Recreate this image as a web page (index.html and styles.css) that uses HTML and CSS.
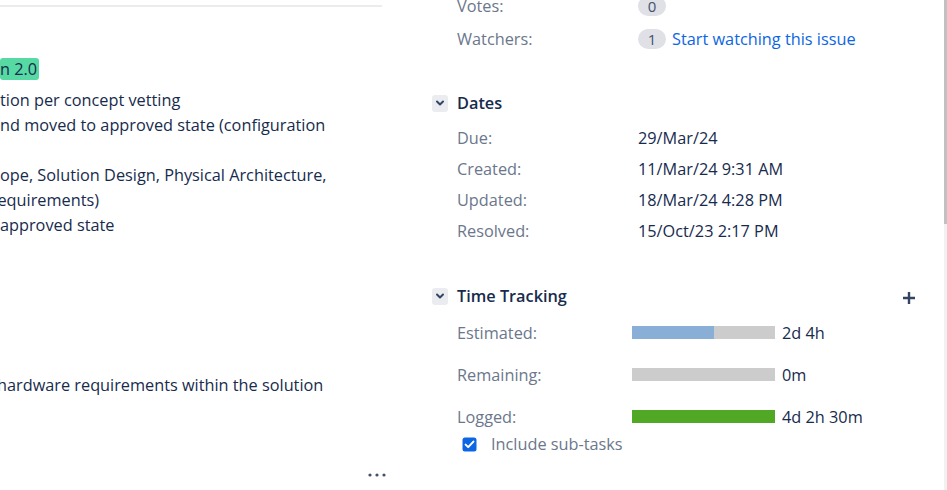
FILE: index.html
```
<!DOCTYPE html>
<html lang="en">
<head>
    <meta charset="UTF-8">
    <meta name="viewport" content="width=device-width, initial-scale=1.0">
    <title>Issue details</title>
    <link rel="stylesheet" href="styles.css">
</head>
<body>
    <div class="page">
        <div class="main">
            <div class="left">
                <div class="rule"></div>
                <div class="lozenge-row">
                    <span class="lozenge">n 2.0</span>
                </div>
                <div class="desc">
                    <div>tion per concept vetting</div>
                    <div>nd moved to approved state (configuration</div>
                    <div>&nbsp;</div>
                    <div>ope, Solution Design, Physical Architecture,</div>
                    <div class="cut">(requirements)</div>
                    <div>approved state</div>
                </div>
                <div class="desc desc-low">
                    <div class="cut-h">hardware requirements within the solution</div>
                </div>
                <div class="more">
                    <svg width="18" height="6" viewBox="0 0 18 6"><circle cx="2" cy="3" r="1.6" fill="#42526e"/><circle cx="9" cy="3" r="1.6" fill="#42526e"/><circle cx="16" cy="3" r="1.6" fill="#42526e"/></svg>
                </div>
            </div>

            <div class="right">
                <div class="people">
                    <div class="row">
                        <span class="label">Votes:</span>
                        <span class="value"><span class="badge">0</span></span>
                    </div>
                    <div class="row">
                        <span class="label">Watchers:</span>
                        <span class="value"><span class="badge">1</span> <a href="#" class="link">Start watching this issue</a></span>
                    </div>
                </div>

                <div class="module">
                    <div class="mod-head">
                        <span class="toggle">
                            <svg width="10" height="10" viewBox="0 0 10 10"><path d="M2 3.5 L5 6.5 L8 3.5" fill="none" stroke="#344563" stroke-width="2" stroke-linecap="round" stroke-linejoin="round"/></svg>
                        </span>
                        <h3>Dates</h3>
                    </div>
                    <div class="row date">
                        <span class="label">Due:</span>
                        <span class="value">29/Mar/24</span>
                    </div>
                    <div class="row date">
                        <span class="label">Created:</span>
                        <span class="value">11/Mar/24 9:31 AM</span>
                    </div>
                    <div class="row date">
                        <span class="label">Updated:</span>
                        <span class="value">18/Mar/24 4:28 PM</span>
                    </div>
                    <div class="row date">
                        <span class="label">Resolved:</span>
                        <span class="value">15/Oct/23 2:17 PM</span>
                    </div>
                </div>

                <div class="module tracking">
                    <div class="mod-head">
                        <span class="toggle">
                            <svg width="10" height="10" viewBox="0 0 10 10"><path d="M2 3.5 L5 6.5 L8 3.5" fill="none" stroke="#344563" stroke-width="2" stroke-linecap="round" stroke-linejoin="round"/></svg>
                        </span>
                        <h3>Time Tracking</h3>
                        <span class="add">
                            <svg width="14" height="14" viewBox="0 0 14 14"><path d="M7 1 V13 M1 7 H13" stroke="#344563" stroke-width="2.4"/></svg>
                        </span>
                    </div>
                    <div class="tt-row">
                        <span class="label">Estimated:</span>
                        <span class="bar"><span class="fill estimate" style="width: 57%"></span></span>
                        <span class="value">2d 4h</span>
                    </div>
                    <div class="tt-row">
                        <span class="label">Remaining:</span>
                        <span class="bar"></span>
                        <span class="value">0m</span>
                    </div>
                    <div class="tt-row">
                        <span class="label">Logged:</span>
                        <span class="bar"><span class="fill logged" style="width: 100%"></span></span>
                        <span class="value">4d 2h 30m</span>
                    </div>
                    <label class="subtasks">
                        <svg width="15" height="15" viewBox="0 0 15 15"><rect x="0.5" y="0.5" width="14" height="14" rx="2.5" fill="#0c66e4"/><path d="M3.6 7.6 L6.2 10.1 L11.4 4.6" fill="none" stroke="#fff" stroke-width="2" stroke-linecap="round" stroke-linejoin="round"/></svg>
                        Include sub-tasks
                    </label>
                </div>
            </div>
        </div>
        <div class="scrollbar"><div class="thumb"></div></div>
    </div>
</body>
</html>
```

FILE: styles.css
```
body {
    margin: 0;
    font-family: "Open Sans", "Noto Sans", sans-serif;
    font-size: 16.3px;
    color: #172b4d;
    background: #fff;
    overflow: hidden;
}

.page {
    display: flex;
    height: 490px;
    overflow: hidden;
}

.main {
    flex: 1;
    display: flex;
    gap: 50px;
}

/* left column: description (clipped by the window) */
.left {
    width: 382px;
    flex: none;
    display: flex;
    flex-direction: column;
}

.rule {
    height: 2px;
    background: #ebecf0;
    margin-top: 5px;
}

.lozenge-row {
    margin-top: 51px;
    height: 22px;
}

.lozenge {
    display: inline-block;
    background: #57d9a3;
    color: #172b4d;
    border-radius: 3px;
    padding: 0 2px 0 0;
    line-height: 22px;
    height: 22px;
}

.desc {
    margin-top: 8px;
    line-height: 25px;
    color: #172b4d;
    white-space: nowrap;
}

.desc .cut {
    margin-left: -14px;
}

.desc-low {
    margin-top: 135px;
}

.desc .cut-h {
    margin-left: -3px;
}

.more {
    align-self: flex-end;
    display: flex;
    margin-top: 74px;
    margin-right: -4px;
}

/* right column: people, dates, time tracking */
.right {
    flex: 1;
    padding-right: 28px;
    margin-top: -11px;
}

.row {
    display: flex;
    align-items: center;
    height: 33px;
    padding-left: 25px;
}

.label {
    width: 181px;
    flex: none;
    color: #6b778c;
}

.value {
    color: #172b4d;
    display: flex;
    align-items: center;
    gap: 6px;
    white-space: nowrap;
}

.badge {
    display: inline-block;
    background: #dfe1e6;
    color: #42526e;
    border-radius: 10px;
    min-width: 28px;
    height: 20px;
    line-height: 20px;
    text-align: center;
    font-size: 15px;
}

.link {
    color: #0c66e4;
    text-decoration: none;
}

.module {
    margin-top: 36px;
}

.mod-head {
    display: flex;
    align-items: center;
    height: 24px;
    margin-bottom: 7px;
}

.toggle {
    width: 16px;
    height: 17px;
    border-radius: 3px;
    background: #ebecf0;
    display: flex;
    align-items: center;
    justify-content: center;
    margin-right: 9px;
}

.mod-head h3 {
    margin: 0;
    font-size: 16.3px;
    font-weight: 600;
    color: #172b4d;
}

.add {
    margin-left: auto;
    display: flex;
    margin-top: 4px;
}

.row.date {
    height: 31px;
}

.tracking {
    margin-top: 38px;
}

.tracking .mod-head {
    margin-bottom: 9px;
}

.tt-row {
    display: flex;
    align-items: center;
    height: 31px;
    margin-bottom: 11px;
    padding-left: 25px;
}

.tt-row .label {
    width: 175px;
}

.bar {
    width: 143px;
    height: 13px;
    background: #ccc;
    display: flex;
    margin-right: 7px;
}

.fill {
    height: 100%;
}

.fill.estimate {
    background: #89afd7;
}

.fill.logged {
    background: #51a825;
}

.subtasks {
    display: flex;
    align-items: center;
    gap: 14px;
    margin-top: -11px;
    padding-left: 30px;
    height: 24px;
    color: #6b778c;
}

.scrollbar {
    width: 3px;
    background: #f1f1f1;
    flex: none;
}

.thumb {
    height: 224px;
    background: #c1c1c1;
}
```
